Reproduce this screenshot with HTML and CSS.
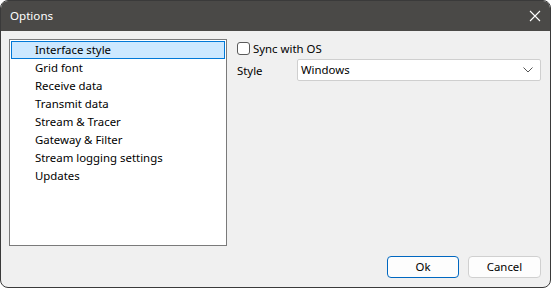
FILE: index.html
```html
<!DOCTYPE html>
<html>
<head>
<meta charset="utf-8">
<link rel="stylesheet" href="styles.css">
</head>
<body>
<div class="window">
  <div class="titlebar">
    <span class="title">Options</span>
    <svg class="close" width="12" height="12" viewBox="0 0 12 12"><path d="M1 1 L11 11 M11 1 L1 11" stroke="#ffffff" stroke-width="1.1" fill="none"/></svg>
  </div>
  <div class="content">
    <div class="main">
      <ul class="list">
        <li class="item selected">Interface style</li>
        <li class="item">Grid font</li>
        <li class="item">Receive data</li>
        <li class="item">Transmit data</li>
        <li class="item">Stream &amp; Tracer</li>
        <li class="item">Gateway &amp; Filter</li>
        <li class="item">Stream logging settings</li>
        <li class="item">Updates</li>
      </ul>
      <div class="panel">
        <label class="check"><span class="box"></span>Sync with OS</label>
        <div class="field">
          <span class="label">Style</span>
          <div class="combo"><span>Windows</span>
            <svg width="10" height="6" viewBox="0 0 10 6"><path d="M0.5 0.5 L5 5 L9.5 0.5" stroke="#555" stroke-width="1" fill="none"/></svg>
          </div>
        </div>
      </div>
    </div>
    <div class="buttons">
      <button class="btn default">Ok</button>
      <button class="btn">Cancel</button>
    </div>
  </div>
</div>
</body>
</html>
```
FILE: styles.css
```css
html, body {
  margin: 0;
  padding: 0;
  background: #ffffff;
}
body {
  width: 551px;
  height: 288px;
  font-family: "Noto Sans", "Open Sans", sans-serif;
  font-size: 11.4px;
  color: #000;
}
.window {
  box-sizing: border-box;
  width: 551px;
  height: 288px;
  border: 1px solid #3a3a3a;
  border-radius: 8px;
  overflow: hidden;
  background: #f0f0f0;
  display: flex;
  flex-direction: column;
}
.titlebar {
  height: 30px;
  background: #4a4947;
  display: flex;
  align-items: center;
  justify-content: space-between;
  padding: 0 9px 1px 9px;
  box-sizing: border-box;
  color: #ffffff;
  flex: none;
}
.title {
  font-size: 11.6px;
}
.close {
  display: block;
}
.content {
  flex: 1;
  display: flex;
  flex-direction: column;
  padding: 8px 9px 9px 8px;
}
.main {
  flex: 1;
  display: flex;
  gap: 10px;
}
.list {
  margin: 0;
  padding: 1px;
  list-style: none;
  width: 215px;
  height: 203px;
  background: #ffffff;
  border: 1px solid #7a7a7a;
}
.item {
  height: 18px;
  line-height: 15px;
  padding-left: 23px;
  box-sizing: border-box;
  border: 1px solid transparent;
  white-space: nowrap;
}
.item.selected {
  background: #cce8ff;
  border-color: #0078d7;
}
.panel {
  flex: 1;
  display: flex;
  flex-direction: column;
  gap: 4px;
  padding-top: 3px;
}
.check {
  display: flex;
  align-items: center;
  gap: 3px;
  height: 13px;
  line-height: 13px;
}
.box {
  box-sizing: border-box;
  width: 13px;
  height: 13px;
  border: 1px solid #5a5a5a;
  border-radius: 3px;
  background: #fff;
}
.field {
  display: flex;
  align-items: center;
}
.label {
  width: 60px;
}
.combo {
  box-sizing: border-box;
  width: 244px;
  height: 22px;
  background: #fff;
  border: 1px solid #cfcfcf;
  border-radius: 2px;
  display: flex;
  align-items: center;
  justify-content: space-between;
  padding: 0 7px 1px 3px;
}
.combo svg {
  margin-top: 1px;
}
.buttons {
  display: flex;
  justify-content: flex-end;
  gap: 9px;
  margin-top: 10px;
}
.btn {
  box-sizing: border-box;
  width: 73px;
  height: 22px;
  font-family: inherit;
  font-size: 11.4px;
  background: #fdfdfd;
  border: 1px solid #d0d0d0;
  border-radius: 4px;
  color: #000;
  padding: 0 0 1px 0;
}
.btn.default {
  border-color: #0067c0;
  width: 72px;
}
```
